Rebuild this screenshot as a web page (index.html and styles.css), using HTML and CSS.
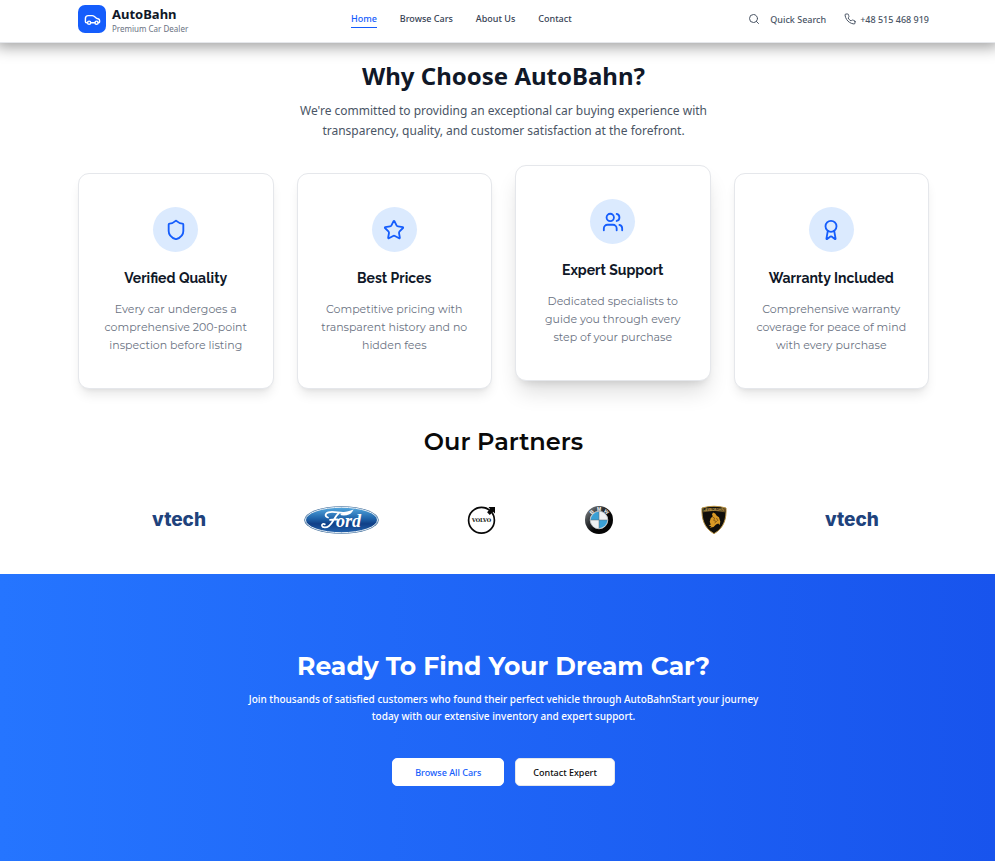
FILE: index.html
```html
<!DOCTYPE html>
<html lang="en">
<head>
<meta charset="utf-8">
<meta name="viewport" content="width=device-width, initial-scale=1">
<title>AutoBahn</title>
<link rel="stylesheet" href="styles.css">
</head>
<body>
<header class="header">
  <a class="brand" href="#">
    <span class="brand-mark">
      <svg viewBox="0 0 24 24" class="icon brand-icon"><path d="M5 16.500H3.500c-1 0-1.500-.6-1.500-1.500V10.500C2 8 3.500 6.500 6 6.500h5.500c1.300 0 2.200.4 3.200 1.200L18 10.500l2.500.8c1 .4 1.500 1.100 1.500 2.200v2c0 .6-.4 1-1 1h-1"/><path d="M9.500 16.500h6"/><circle cx="7.200" cy="16.500" r="2.200"/><circle cx="17.700" cy="16.500" r="2.200"/></svg>
    </span>
    <span class="brand-text">
      <span class="brand-name">AutoBahn</span>
      <span class="brand-tag">Premium Car Dealer</span>
    </span>
  </a>
  <nav class="nav">
    <a class="nav-link active" href="#">Home</a>
    <a class="nav-link" href="#">Browse Cars</a>
    <a class="nav-link" href="#">About Us</a>
    <a class="nav-link" href="#">Contact</a>
  </nav>
  <div class="actions">
    <button class="search" type="button">
      <svg viewBox="0 0 24 24" class="icon small-icon"><circle cx="11" cy="11" r="8"/><path d="m21 21-4.300-4.300"/></svg>
      Quick Search
    </button>
    <a class="phone" href="tel:+48515468919">
      <svg viewBox="0 0 24 24" class="icon small-icon"><path d="M22 16.920v3a2 2 0 0 1-2.180 2 19.790 19.790 0 0 1-8.630-3.070 19.500 19.500 0 0 1-6-6 19.790 19.790 0 0 1-3.070-8.670A2 2 0 0 1 4.110 2h3a2 2 0 0 1 2 1.720 12.840 12.840 0 0 0 .7 2.810 2 2 0 0 1-.45 2.110L8.090 9.910a16 16 0 0 0 6 6l1.270-1.270a2 2 0 0 1 2.110-.45 12.840 12.840 0 0 0 2.810.7A2 2 0 0 1 22 16.920z"/></svg>
      +48 515 468 919
    </a>
  </div>
</header>

<main>
  <section class="why">
    <h1 class="why-title">Why Choose AutoBahn?</h1>
    <p class="why-text">We're committed to providing an exceptional car buying experience with transparency, quality, and customer satisfaction at the forefront.</p>
    <div class="cards">
      <article class="card">
        <span class="badge"><svg viewBox="0 0 24 24" class="icon badge-icon"><path d="M20 13c0 5-3.500 7.500-7.660 8.950a1 1 0 0 1-.67-.01C7.500 20.500 4 18 4 13V6a1 1 0 0 1 1-1c2 0 4.500-1.200 6.240-2.720a1.170 1.170 0 0 1 1.520 0C14.510 3.810 17 5 19 5a1 1 0 0 1 1 1z"/></svg></span>
        <h2 class="card-title">Verified Quality</h2>
        <p class="card-text">Every car undergoes a comprehensive 200-point inspection before listing</p>
      </article>
      <article class="card">
        <span class="badge"><svg viewBox="0 0 24 24" class="icon badge-icon"><path d="M11.525 2.295a.53.53 0 0 1 .95 0l2.310 4.679a2.123 2.123 0 0 0 1.595 1.160l5.166.756a.53.53 0 0 1 .294.904l-3.736 3.638a2.123 2.123 0 0 0-.611 1.878l.882 5.140a.53.53 0 0 1-.771.560l-4.618-2.428a2.122 2.122 0 0 0-1.973 0L6.396 21.010a.53.53 0 0 1-.77-.560l.881-5.139a2.122 2.122 0 0 0-.611-1.879L2.160 9.795a.53.53 0 0 1 .294-.906l5.165-.755a2.122 2.122 0 0 0 1.597-1.160z"/></svg></span>
        <h2 class="card-title">Best Prices</h2>
        <p class="card-text">Competitive pricing with transparent history and no hidden fees</p>
      </article>
      <article class="card raised">
        <span class="badge"><svg viewBox="0 0 24 24" class="icon badge-icon"><path d="M16 21v-2a4 4 0 0 0-4-4H6a4 4 0 0 0-4 4v2"/><circle cx="9" cy="7" r="4"/><path d="M22 21v-2a4 4 0 0 0-3-3.870"/><path d="M16 3.130a4 4 0 0 1 0 7.750"/></svg></span>
        <h2 class="card-title">Expert Support</h2>
        <p class="card-text">Dedicated specialists to guide you through every step of your purchase</p>
      </article>
      <article class="card">
        <span class="badge"><svg viewBox="0 0 24 24" class="icon badge-icon"><path d="m15.477 12.890 1.515 8.526a.5.5 0 0 1-.81.470l-3.580-2.687a1 1 0 0 0-1.197 0l-3.586 2.686a.5.5 0 0 1-.81-.469l1.514-8.526"/><circle cx="12" cy="8" r="6"/></svg></span>
        <h2 class="card-title">Warranty Included</h2>
        <p class="card-text">Comprehensive warranty coverage for peace of mind with every purchase</p>
      </article>
    </div>
  </section>

  <section class="partners">
    <h2 class="partners-title">Our Partners</h2>
    <div class="logos">
      <span class="vtech">vtech</span>
      <svg class="ford" viewBox="0 0 75 28" role="img" aria-label="Ford">
        <defs><linearGradient id="ford-blue" x1="0" y1="0" x2="0" y2="1"><stop offset="0" stop-color="#55a9df"/><stop offset=".45" stop-color="#1e62a9"/><stop offset=".65" stop-color="#103f87"/><stop offset="1" stop-color="#2263ae"/></linearGradient></defs>
        <ellipse cx="37.500" cy="14" rx="37.300" ry="13.800" fill="#416f9d"/>
        <ellipse cx="37.500" cy="14" rx="36" ry="12.700" fill="url(#ford-blue)" stroke="#e8f0f7"/>
        <text x="32" y="20.500" class="ford-word">ord</text>
        <path d="M24 11.500c-3-.8-3.500-4 .5-5.200 5-1.300 11 .9 15.500.5 3-.2 5.500-1 7.500-1.600-2 3-6 3.600-10 3.200M34.500 7.500C30.500 10.500 29 17 25 20c-2.500 1.900-6.500 2-7-.3-.3-1.700 1.500-2.400 2.800-1.400M26 13.800c2.500-.6 5-.6 7.500-.3" fill="none" stroke="#fff" stroke-width="1.800" stroke-linecap="round"/>
      </svg>
      <svg class="volvo" viewBox="0 0 30 28" role="img" aria-label="Volvo">
        <circle cx="14.500" cy="14.300" r="12.900" fill="#fff" stroke="#080808" stroke-width="1.700"/>
        <path d="M21.500 1H28v6.500l-2-1.800-3.200 3.200-2.700-2.700L23 3z" fill="#080808"/>
        <text x="14.500" y="16" class="volvo-word">VOLVO</text>
      </svg>
      <svg class="bmw" viewBox="0 0 28 28" role="img" aria-label="BMW">
        <defs><linearGradient id="bmw-rim" x1="0" y1="0" x2="1" y2="1"><stop offset="0" stop-color="#929698"/><stop offset=".35" stop-color="#33373a"/><stop offset=".6" stop-color="#050505"/></linearGradient></defs>
        <circle cx="14" cy="14" r="14" fill="url(#bmw-rim)"/>
        <circle cx="14" cy="14" r="8.800" fill="#eef0f1" stroke="#c5cacd" stroke-width=".8"/>
        <path d="M14 14V5.700A8.300 8.300 0 0 0 5.700 14zM14 14v8.300a8.300 8.300 0 0 0 8.300-8.300z" fill="#3aa0d5"/>
        <path d="M5.700 14h16.600M14 5.700v16.600" stroke="#5b6a73" stroke-width=".5"/>
        <text x="14" y="4.800" class="bmw-letter" transform="rotate(-42 14 14)">B</text>
        <text x="14" y="4.800" class="bmw-letter">M</text>
        <text x="14" y="4.800" class="bmw-letter" transform="rotate(42 14 14)">W</text>
      </svg>
      <svg class="lambo" viewBox="0 0 26 28" role="img" aria-label="Lamborghini">
        <path d="M1 2Q13-1.500 25 2c.5 11-2 20-12 25.700C3 22 .5 13 1 2z" fill="#100f0b" stroke="#b89243"/>
        <path d="M2 5.800q11-3 22 0" fill="none" stroke="#9b7b36" stroke-width=".7"/>
        <text x="13" y="4.500" class="lambo-word">LAMBORGHINI</text>
        <path d="m12 6.500 2.200 1 1.500 2.200 2.300 1.600 1.300 4.300-.6 3.400-1.500-1.500-2.200.9-2.500 2.600-3.800.8 1.700-1.700-2.700-.2 2-1.400-1-2.800 1-3.400 2.100-2-.8-1.700z" fill="#d99a25"/>
        <path d="m11.500 11 2 1-.7 2.500 2.700 1-2 1.500M15.500 12l1.500 3" fill="none" stroke="#6a4510" stroke-width=".7"/>
      </svg>
      <span class="vtech">vtech</span>
    </div>
  </section>

  <section class="cta">
    <h2 class="cta-title">Ready To Find Your Dream Car?</h2>
    <p class="cta-text">Join thousands of satisfied customers who found their perfect vehicle through AutoBahnStart your journey today with our extensive inventory and expert support.</p>
    <div class="cta-buttons">
      <button class="button primary" type="button">Browse All Cars</button>
      <button class="button secondary" type="button">Contact Expert</button>
    </div>
  </section>
</main>
</body>
</html>
```
FILE: styles.css
```css
* { box-sizing: border-box; }

:root {
  --blue: #155dfc;
  --ink: #101828;
  --slate: #4a5565;
  --left: 78px;
  --right: 66px;
  --body: "Noto Sans", sans-serif;
  --display: Montserrat, Inter, sans-serif;
}

html { height: 100%; }

body {
  margin: 0;
  min-height: 100%;
  display: flex;
  flex-direction: column;
  background: #fff;
  color: var(--ink);
  font-family: var(--body);
}

h1, h2, p { margin: 0; }
a { color: inherit; text-decoration: none; }
button { font-family: inherit; cursor: pointer; }

.icon {
  fill: none;
  stroke: currentColor;
  stroke-width: 2;
  stroke-linecap: round;
  stroke-linejoin: round;
}

.header {
  display: flex;
  align-items: center;
  justify-content: space-between;
  padding: 4px var(--right) 8px var(--left);
  border-bottom: 1px solid #e5e7eb;
  box-shadow: 0 0 14px 4px rgba(0, 0, 0, 0.38);
  background: #fff;
}

.brand { display: flex; align-items: center; gap: 6px; }
.brand-mark {
  display: grid;
  place-items: center;
  width: 28px;
  height: 28px;
  border-radius: 7px;
  background: var(--blue);
  color: #fff;
}
.brand-icon { width: 17px; height: 17px; }
.brand-text { display: flex; flex-direction: column; }
.brand-name { font-size: 13px; line-height: 20px; font-weight: 700; }
.brand-tag { font-size: 8px; line-height: 10px; color: #6a7282; }

.nav { display: flex; align-items: center; gap: 23px; margin-right: 14px; }
.nav-link { font-size: 9px; line-height: 16px; font-weight: 500; color: #364153; }
.nav-link.active { color: var(--blue); border-bottom: 1px solid var(--blue); }

.actions { display: flex; align-items: center; gap: 18px; color: var(--slate); font-size: 9px; }
.search {
  display: flex;
  align-items: center;
  gap: 10px;
  padding: 0;
  border: 0;
  background: none;
  color: inherit;
  font-size: 9px;
  font-weight: 500;
}
.phone { display: flex; align-items: center; gap: 4px; font-weight: 500; }
.small-icon { width: 12px; height: 12px; }

main { flex: 1; display: flex; flex-direction: column; }

.why {
  display: flex;
  flex-direction: column;
  align-items: center;
  padding: 17px var(--right) 0 var(--left);
  text-align: center;
}
.why-title { font-size: 24px; line-height: 32px; font-weight: 700; }
.why-text {
  max-width: 430px;
  margin-top: 9px;
  font-size: 12px;
  line-height: 20px;
  color: var(--slate);
}

.cards {
  align-self: stretch;
  display: grid;
  grid-template-columns: repeat(4, 1fr);
  gap: 23px;
  margin-top: 32px;
}
.card {
  display: flex;
  flex-direction: column;
  align-items: center;
  padding: 33px 20px 34px;
  border: 1px solid #e5e7eb;
  border-radius: 11px;
  background: #fff;
  box-shadow: 0 8px 12px -3px rgba(0, 0, 0, 0.1), 0 3px 5px -3px rgba(0, 0, 0, 0.08);
}
.card.raised {
  margin-top: -8px;
  margin-bottom: 8px;
  box-shadow: 0 14px 22px -4px rgba(0, 0, 0, 0.14), 0 6px 8px -5px rgba(0, 0, 0, 0.12);
}
.badge {
  display: grid;
  place-items: center;
  width: 45px;
  height: 45px;
  border-radius: 50%;
  background: #dbeafe;
  color: var(--blue);
}
.badge-icon { width: 22px; height: 22px; }
.card-title {
  margin-top: 16px;
  font-family: Raleway, Lato, sans-serif;
  font-size: 14px;
  line-height: 20px;
  font-weight: 700;
}
.card-text {
  margin-top: 12px;
  font-family: var(--display);
  font-size: 11px;
  line-height: 18px;
  color: #6a7282;
}

.partners { padding: 37px var(--right) 40px var(--left); text-align: center; }
.partners-title {
  font-family: var(--display);
  font-size: 24px;
  line-height: 32px;
  font-weight: 600;
  color: #0a0a0a;
}
.logos {
  display: flex;
  align-items: center;
  justify-content: center;
  gap: 88px;
  margin-top: 48px;
  padding-left: 24px;
}
.logos svg { display: block; height: 28px; overflow: visible; }
.vtech {
  padding: 0 10px;
  font-family: Inter, sans-serif;
  font-size: 19px;
  line-height: 28px;
  font-weight: 800;
  color: #20427c;
}
.ford { width: 75px; }
.volvo { width: 30px; }
.bmw { width: 28px; }
.lambo { width: 26px; }
.ford-word { font: italic 700 18px "Liberation Serif", serif; fill: #fff; }
.volvo-word { font: 700 5px "DejaVu Serif", serif; fill: #080808; text-anchor: middle; }
.bmw-letter { font: 700 5px "Liberation Sans", sans-serif; fill: #fff; text-anchor: middle; }
.lambo-word { font: 700 3px "Liberation Sans", sans-serif; fill: #d2aa54; text-anchor: middle; }

.cta {
  flex: 1;
  display: flex;
  flex-direction: column;
  align-items: center;
  padding: 76px var(--right) 75px var(--left);
  background: linear-gradient(to right, #2575ff, #1854ed);
  color: #fff;
  text-align: center;
}
.cta-title { font-family: var(--display); font-size: 25px; line-height: 32px; font-weight: 700; }
.cta-text {
  max-width: 530px;
  margin-top: 9px;
  font-size: 10px;
  line-height: 17px;
  font-weight: 500;
}
.cta-buttons { display: flex; gap: 11px; margin-top: 33px; }
.button {
  height: 28px;
  border: 1px solid #fff;
  border-radius: 5px;
  background: #fff;
  font-size: 9px;
  font-weight: 500;
}
.primary { padding: 0 22px; color: var(--blue); }
.secondary { padding: 0 17px; border-color: #e5e7eb; color: #0a0a0a; }
```
